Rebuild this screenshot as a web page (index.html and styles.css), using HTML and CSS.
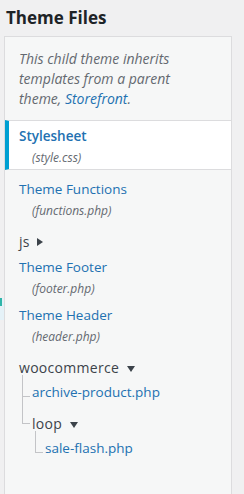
FILE: index.html
```
<!DOCTYPE html>
<html lang="en">
<head>
  <meta charset="UTF-8">
  <meta name="viewport" content="width=device-width, initial-scale=1">
  <title>Theme Files</title>
  <link rel="stylesheet" href="styles.css">
</head>
<body>

  <div class="page">
    <div class="gutter">
      <div class="peek"><div class="peek-mark"></div></div>
    </div>

    <div class="main">
      <h2 class="title">Theme Files</h2>

      <div class="files">
        <p class="note"><span>This child theme inherits templates from a parent theme,</span> <a href="#">Storefront</a><span>.</span></p>

        <ul class="tree">
          <li class="file current">
            <a href="#">Stylesheet</a>
            <span class="fname">(style.css)</span>
          </li>
          <li class="file">
            <a href="#">Theme Functions</a>
            <span class="fname">(functions.php)</span>
          </li>
          <li class="folder">
            <span class="label closed">js</span>
          </li>
          <li class="file">
            <a href="#">Theme Footer</a>
            <span class="fname">(footer.php)</span>
          </li>
          <li class="file">
            <a href="#">Theme Header</a>
            <span class="fname">(header.php)</span>
          </li>
          <li class="folder">
            <span class="label open">woocommerce</span>
            <ul class="sub">
              <li class="file"><a href="#">archive-product.php</a></li>
              <li class="folder">
                <span class="label open">loop</span>
                <ul class="sub">
                  <li class="file"><a href="#">sale-flash.php</a></li>
                </ul>
              </li>
            </ul>
          </li>
        </ul>
      </div>
    </div>
  </div>

</body>
</html>
```

FILE: styles.css
```
html, body { margin: 0; padding: 0; }
body { font-family: "Open Sans", "Noto Sans", sans-serif; font-size: 13px; color: #3c434a; background: #f0f0f1; overflow: hidden; }
a { color: #2271b1; text-decoration: none; }
ul { list-style: none; margin: 0; padding: 0; }

.page { display: flex; width: 244px; height: 494px; }
.gutter { width: 4px; padding-top: 298px; }
.peek { height: 22px; background: #e5f2f8; }
.peek-mark { width: 2px; height: 8px; background: #2fb5a9; }
.main { width: 228px; }

.title { margin: 0; padding: 6px 0 6px 2px; font-size: 17px; line-height: 24px; font-weight: 700; color: #1d2327; }

.files { background: #f6f7f7; border: 1px solid #dcdcde; border-bottom: none; min-height: 470px; }
.note { margin: 0; padding: 12px 18px 12px 14px; font-size: 14px; font-style: italic; line-height: 20px; color: #646970; }

.tree { padding-bottom: 20px; }
.file { padding: 2px 0 4px 14px; }
.file a { display: block; font-size: 13.5px; line-height: 21px; }
.fname { display: block; padding-left: 13px; font-size: 12px; font-style: italic; line-height: 21px; color: #646970; }

.current { margin: -1px -1px 7px 0; padding: 5px 0 1px 10px; background: #fff; border: 1px solid #dcdcde; border-left: 4px solid #00a0d2; }
.current a { font-weight: 600; }

.folder { padding: 6px 0 3px 14px; }
.label { display: inline-block; font-size: 14px; letter-spacing: 0.3px; line-height: 21px; color: #3c434a; }
.label::after { content: ""; display: inline-block; margin-left: 7px; vertical-align: 1px; }
.label.closed::after { border-left: 6px solid #3c434a; border-top: 4px solid transparent; border-bottom: 4px solid transparent; }
.label.open::after { border-top: 6px solid #3c434a; border-left: 4px solid transparent; border-right: 4px solid transparent; margin-left: 8px; }

.sub { margin: 2px 0 0 3px; }
.sub > li { position: relative; padding-left: 10px; }
.sub > li.folder { padding-bottom: 0; }
.sub > li::before { content: ""; position: absolute; left: 0; top: -11px; width: 8px; height: 28px; box-sizing: border-box; border-left: 1px solid #c3c4c7; border-bottom: 1px solid #c3c4c7; }
.sub > li:first-child::before { top: -5px; height: 22px; }
```
